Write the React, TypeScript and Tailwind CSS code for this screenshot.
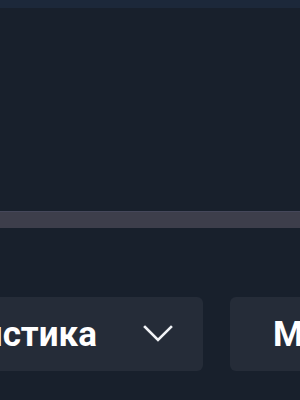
import React from 'react';

const Chevron: React.FC = () => (
  <svg width="30" height="18" viewBox="0 0 30 18" fill="none" className="shrink-0">
    <polyline
      points="2,2 15,15 28,2"
      stroke="#f1f3f6"
      strokeWidth="2.6"
      strokeLinecap="square"
      strokeLinejoin="miter"
    />
  </svg>
);

const App: React.FC = () => {
  return (
    <div className="w-[300px] h-[400px] overflow-hidden bg-[#18202c] font-['Roboto',sans-serif]">
      <div className="h-[8px] bg-[#1c283a]" />

      <div className="h-[203px]" />
      <div className="h-[17px] bg-[#3d3e4b] border-t border-[#45475a]" />

      <div className="h-[69px]" />
      <div className="flex gap-[27px] h-[74px]">
        <button className="flex items-center shrink-0 h-full -ml-[118px] pl-6 pr-[30px] rounded-md bg-[#252c38]">
          <span className="text-[35px] font-bold leading-none text-white whitespace-nowrap">
            Статистика
          </span>
          <span className="ml-[46px]">
            <Chevron />
          </span>
        </button>
        <button className="flex items-center shrink-0 h-full pl-[43px] pr-6 rounded-md bg-[#252c38]">
          <span className="text-[35px] font-bold leading-none text-white whitespace-nowrap">
            Матчи
          </span>
        </button>
      </div>
    </div>
  );
};

export default App;
